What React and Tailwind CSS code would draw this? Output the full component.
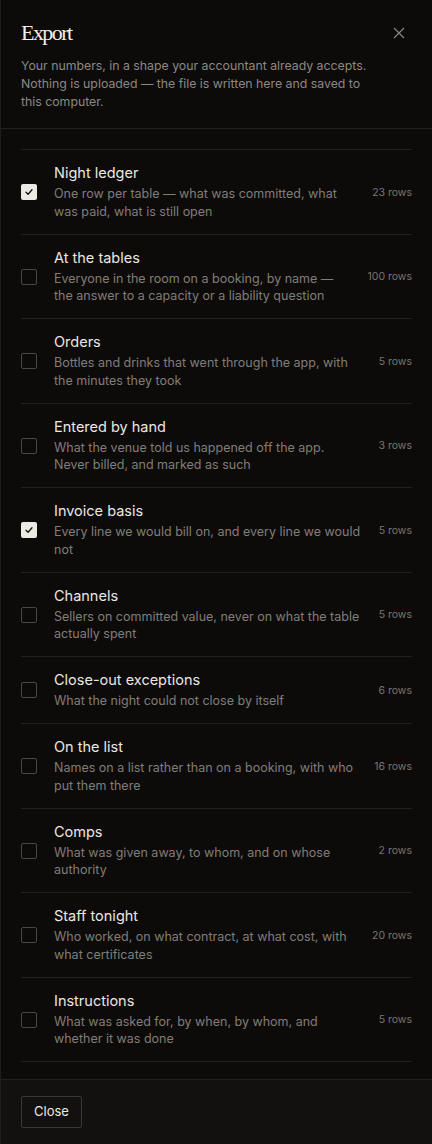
import React from "react";

const items = [
  { t: "Night ledger", d: "One row per table — what was committed, what was paid, what is still open", n: "23 rows", c: true },
  { t: "At the tables", d: "Everyone in the room on a booking, by name — the answer to a capacity or a liability question", n: "100 rows" },
  { t: "Orders", d: "Bottles and drinks that went through the app, with the minutes they took", n: "5 rows" },
  { t: "Entered by hand", d: "What the venue told us happened off the app. Never billed, and marked as such", n: "3 rows" },
  { t: "Invoice basis", d: "Every line we would bill on, and every line we would not", n: "5 rows", c: true },
  { t: "Channels", d: "Sellers on committed value, never on what the table actually spent", n: "5 rows" },
  { t: "Close-out exceptions", d: "What the night could not close by itself", n: "6 rows" },
  { t: "On the list", d: "Names on a list rather than on a booking, with who put them there", n: "16 rows" },
  { t: "Comps", d: "What was given away, to whom, and on whose authority", n: "2 rows" },
  { t: "Staff tonight", d: "Who worked, on what contract, at what cost, with what certificates", n: "20 rows" },
  { t: "Instructions", d: "What was asked for, by when, by whom, and whether it was done", n: "5 rows" },
];

function Check({ on }) {
  if (on)
    return (
      <div className="mt-[2px] w-4 h-4 shrink-0 rounded-[2px] bg-[#ede9e3] flex items-center justify-center">
        <svg width="10" height="10" viewBox="0 0 10 10" fill="none">
          <path d="M2 5.2 L4.1 7.2 L8 2.8" stroke="#141210" strokeWidth="1.3" strokeLinecap="round" strokeLinejoin="round" />
        </svg>
      </div>
    );
  return <div className="mt-[2px] w-4 h-4 shrink-0 rounded-[2px] border border-[#4a4642]" />;
}

export default function App() {
  return (
    <div
      className="w-[432px] h-[1144px] flex flex-col bg-[#0c0b0a] border-l border-[#201e1c] overflow-hidden"
      style={{ fontFamily: "Inter, 'Noto Sans', sans-serif" }}
    >
      <div className="px-5 pt-[18px] pb-[17px] border-b border-[#23211f]">
        <div className="flex items-center justify-between">
          <h1
            className="text-[22px] leading-[30px] text-[#f1ede7] tracking-[-0.07em]"
            style={{ fontFamily: "'Liberation Serif', 'DejaVu Serif', serif" }}
          >
            Export
          </h1>
          <svg width="12" height="12" viewBox="0 0 12 12" className="mr-[7px]">
            <path d="M1 1 L11 11 M11 1 L1 11" stroke="#8a8580" strokeWidth="1.2" />
          </svg>
        </div>
        <p className="mt-[9px] max-w-[350px] text-[12.3px] leading-[18px] text-[#8d8882]">
          Your numbers, in a shape your accountant already accepts. Nothing is uploaded — the file is written here and saved to this computer.
        </p>
      </div>
      <div className="flex-1 overflow-hidden px-5 pt-5">
        <div className="border-t border-[#23211f]">
          {items.map((it) => (
            <div key={it.t} className="flex items-center gap-4 pt-3 pb-[13.5px] border-b border-[#23211f]">
              <Check on={it.c} />
              <div className="flex-1 min-w-0 ml-[1px]">
                <div className="text-[14.5px] leading-[22px] text-[#ebe7e1]">{it.t}</div>
                <div className="mt-[1px] text-[12.5px] leading-[17.5px] text-[#827d77]">{it.d}</div>
              </div>
              <div className="mt-[3px] shrink-0 text-[10.5px] text-[#7a756f]">{it.n}</div>
            </div>
          ))}
        </div>
      </div>
      <div className="px-5 pt-4 pb-4 border-t border-[#23211f] bg-[#121110]">
        <button className="h-[32px] px-[12px] border border-[#3a3734] rounded-[2px] text-[13px] text-[#ebe7e1]">
          Close
        </button>
      </div>
    </div>
  );
}
